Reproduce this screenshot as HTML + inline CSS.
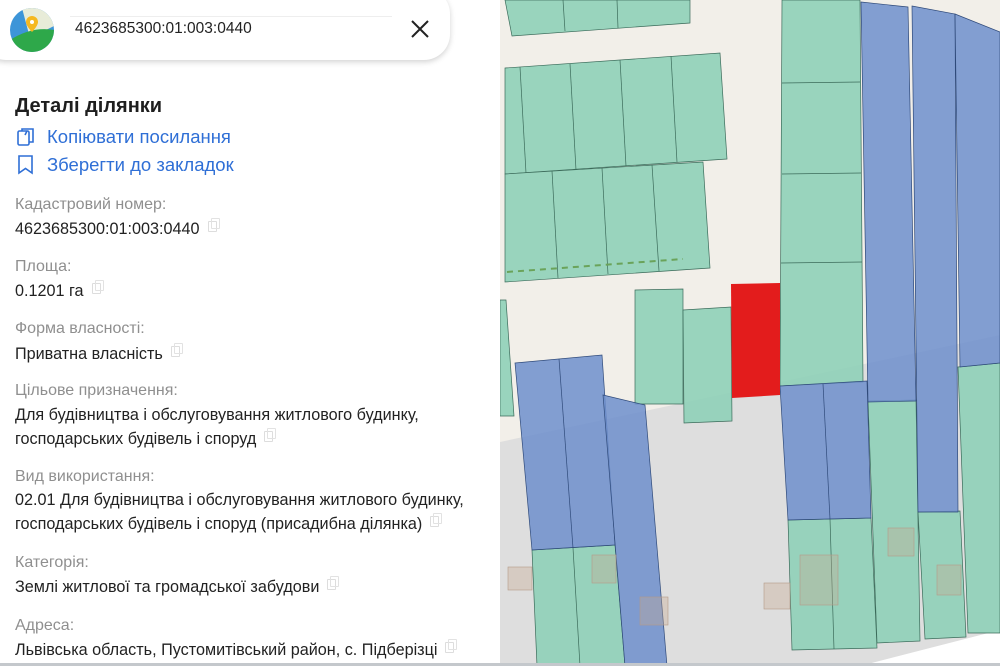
<!DOCTYPE html>
<html><head><meta charset="utf-8"><style>
*{margin:0;padding:0;box-sizing:border-box}
body{width:1000px;height:666px;overflow:hidden;background:#fff;font-family:"Liberation Sans","DejaVu Sans",sans-serif;position:relative}
.t{position:absolute;left:15px;white-space:nowrap;font-size:16.2px;color:#222}
.l{color:#8f8f8f;font-size:16px}
.c{display:inline-block;width:9px;height:11px;border:1px solid #ddd;border-radius:1px;margin-left:8px;vertical-align:2px;position:relative}
.c:after{content:"";position:absolute;left:2px;top:-4px;width:7px;height:9px;border:1px solid #e2e2e2;border-radius:1px}
.a{position:absolute;left:47px;font-size:18.5px;color:#2f6fd6;white-space:nowrap}
</style></head><body>
<svg style="position:absolute;left:0;top:0" width="1000" height="666">
<rect x="500" y="0" width="500" height="666" fill="#f2efe9"/>
<polygon points="500,442 1000,335 1000,666 500,666" fill="#dedede"/>
<polygon points="860,666 1000,630 1000,666" fill="#fff"/>
<g fill="#8fd0b8" fill-opacity=".9" stroke="#3b6b5a" stroke-width=".7">
<polygon points="505,0 690,0 690,23 512,36"/>
<line x1="563" y1="0" x2="565" y2="31"/><line x1="617" y1="0" x2="618" y2="28"/>
<polygon points="505,68 720,53 727,159 505,174"/>
<line x1="520" y1="67" x2="526" y2="173"/><line x1="570" y1="64" x2="576" y2="170"/><line x1="620" y1="60" x2="626" y2="166"/><line x1="671" y1="56" x2="677" y2="162"/>
<polygon points="505,174 703,162 710,268 505,282"/>
<line x1="552" y1="171" x2="558" y2="278"/><line x1="602" y1="168" x2="608" y2="274"/><line x1="652" y1="165" x2="659" y2="271"/>
<polygon points="500,300 506,300 514,416 500,416"/>
<polygon points="635,290 683,289 683,404 635,404"/>
<polygon points="683,310 731,307 732,421 684,423"/>
<polygon points="782,0 860,0 863,382 780,386"/>
<line x1="782" y1="83" x2="860" y2="82"/><line x1="782" y1="174" x2="861" y2="173"/><line x1="781" y1="263" x2="862" y2="262"/>
<polygon points="532,550 615,545 625,666 537,666"/>
<line x1="573" y1="548" x2="580" y2="666"/>
<polygon points="788,520 871,518 877,648 792,650"/>
<line x1="830" y1="519" x2="834" y2="649"/>
<polygon points="868,401 916,400 920,641 877,643"/>
<polygon points="918,512 960,511 966,637 925,639"/>
<polygon points="958,367 1000,363 1000,633 968,633"/>
</g>
<line x1="507" y1="272" x2="683" y2="259" stroke="#6aa35a" stroke-width="2" stroke-dasharray="6,5"/>
<g fill="#6f8fcc" fill-opacity=".85" stroke="#2f4a7a" stroke-width=".7">
<polygon points="861,2 908,7 916,401 868,402"/>
<polygon points="912,6 955,14 958,512 918,512"/>
<polygon points="955,14 1000,32 1000,363 960,367"/>
<polygon points="515,363 602,355 615,545 532,550"/>
<line x1="559" y1="359" x2="573" y2="548"/>
<polygon points="603,395 645,405 667,666 625,666"/>
<polygon points="780,386 867,381 871,518 788,520"/>
<line x1="823" y1="384" x2="830" y2="519"/>
</g>
<polygon points="731,284 780,283 780,395 732,398" fill="#e31c1c"/>
<g fill="#c8a88e" fill-opacity=".35" stroke="#b49a88" stroke-width=".6">
<rect x="508" y="567" width="24" height="23"/><rect x="764" y="583" width="26" height="26"/>
<rect x="640" y="597" width="28" height="28"/><rect x="800" y="555" width="38" height="50"/>
<rect x="888" y="528" width="26" height="28"/><rect x="937" y="565" width="24" height="30"/>
<rect x="592" y="555" width="24" height="28"/>
</g>
<rect x="500" y="663" width="500" height="3" fill="#c4c8cc"/>
</svg>
<div style="position:absolute;left:0;top:0;width:500px;height:666px;background:#fff"></div>
<div style="position:absolute;left:-20px;top:-12px;width:470px;height:72px;background:#fff;border-radius:26px;box-shadow:0 2px 6px rgba(0,0,0,.18)"></div>
<div style="position:absolute;left:70px;top:16px;width:322px;height:1px;background:#eee"></div>
<svg style="position:absolute;left:10px;top:8px" width="44" height="44" viewBox="0 0 44 44">
<defs><clipPath id="cc"><circle cx="22" cy="22" r="22"/></clipPath></defs>
<g clip-path="url(#cc)"><rect width="44" height="44" fill="#3d95d8"/>
<polygon points="12,0 44,0 44,18 20,30" fill="#e8ecd8"/>
<path d="M0 32 Q22 18 44 22 V44 H0Z" fill="#2ea84a"/>
<path d="M22 8a6 6 0 0 1 6 6c0 4-6 10-6 10s-6-6-6-10a6 6 0 0 1 6-6z" fill="#f5b820"/><circle cx="22" cy="14" r="2" fill="#fff"/></g></svg>
<div style="position:absolute;left:75px;top:20px;font-size:15.5px;color:#222">4623685300:01:003:0440</div>
<svg style="position:absolute;left:410px;top:19px" width="20" height="20"><path d="M2 2L18 18M18 2L2 18" stroke="#222" stroke-width="2"/></svg>
<div style="position:absolute;left:15px;top:95px;font-size:20px;font-weight:bold;color:#1e1e1e">Деталі ділянки</div>
<svg style="position:absolute;left:15px;top:126px" width="22" height="22" viewBox="0 0 22 22" fill="none" stroke="#2f6fd6" stroke-width="1.6"><rect x="3" y="5" width="11" height="14" rx="1.5"/><path d="M7 5V3h11v13h-4"/><path d="M10 9l2-4"/></svg>
<div class="a" style="top:126px">Копіювати посилання</div>
<svg style="position:absolute;left:15px;top:154px" width="22" height="22" viewBox="0 0 22 22" fill="none" stroke="#2f6fd6" stroke-width="1.6"><path d="M4 2h13v17l-6.5-4.5L4 19z"/></svg>
<div class="a" style="top:154px">Зберегти до закладок</div>
<div class="t l" style="top:196px">Кадастровий номер:</div>
<div class="t" style="top:220px">4623685300:01:003:0440<span class="c"></span></div>
<div class="t l" style="top:258px">Площа:</div>
<div class="t" style="top:282px">0.1201 га<span class="c"></span></div>
<div class="t l" style="top:320px">Форма власності:</div>
<div class="t" style="top:345px">Приватна власність<span class="c"></span></div>
<div class="t l" style="top:382px">Цільове призначення:</div>
<div class="t" style="top:406px">Для будівництва і обслуговування житлового будинку,</div>
<div class="t" style="top:430px">господарських будівель і споруд<span class="c"></span></div>
<div class="t l" style="top:468px">Вид використання:</div>
<div class="t" style="top:491px">02.01 Для будівництва і обслуговування житлового будинку,</div>
<div class="t" style="top:515px">господарських будівель і споруд (присадибна ділянка)<span class="c"></span></div>
<div class="t l" style="top:554px">Категорія:</div>
<div class="t" style="top:578px">Землі житлової та громадської забудови<span class="c"></span></div>
<div class="t l" style="top:617px">Адреса:</div>
<div class="t" style="top:641px">Львівська область, Пустомитівський район, с. Підберізці<span class="c"></span></div>
<div style="position:absolute;left:0;top:663px;width:500px;height:3px;background:#c4c8cc"></div>
</body></html>
